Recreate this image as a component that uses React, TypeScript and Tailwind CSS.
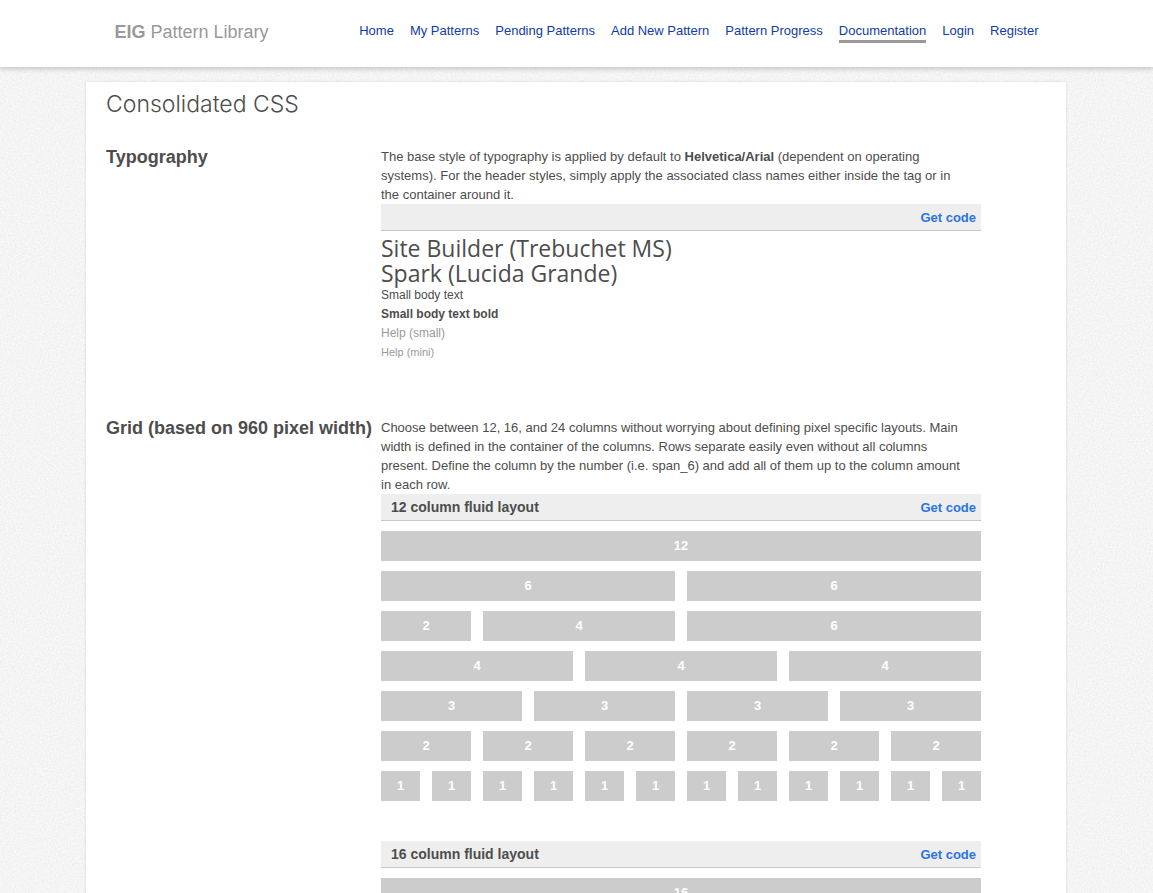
import type { ReactNode } from "react";

const navItems = [
  "Home",
  "My Patterns",
  "Pending Patterns",
  "Add New Pattern",
  "Pattern Progress",
  "Documentation",
  "Login",
  "Register",
];

const spanClass: Record<number, string> = {
  1: "col-span-1",
  2: "col-span-2",
  3: "col-span-3",
  4: "col-span-4",
  6: "col-span-6",
  12: "col-span-12",
};

const twelveColumnRows = [
  [12],
  [6, 6],
  [2, 4, 6],
  [4, 4, 4],
  [3, 3, 3, 3],
  [2, 2, 2, 2, 2, 2],
  [1, 1, 1, 1, 1, 1, 1, 1, 1, 1, 1, 1],
];

function PaperTexture() {
  return (
    <svg className="absolute inset-0 -z-10 h-full w-full" aria-hidden="true">
      <filter id="paper" x="0" y="0" width="100%" height="100%" colorInterpolationFilters="sRGB">
        <feTurbulence type="fractalNoise" baseFrequency="0.6" numOctaves="3" stitchTiles="stitch" />
        <feColorMatrix
          type="matrix"
          values="0.08 0 0 0 0.918  0.08 0 0 0 0.918  0.08 0 0 0 0.918  0 0 0 0 1"
        />
      </filter>
      <rect width="100%" height="100%" filter="url(#paper)" />
    </svg>
  );
}

function CodeBar({ title }: { title?: string }) {
  return (
    <div className="flex h-[27px] items-center justify-between border-b border-[#c8c8c8] bg-[#eeeeee] pr-[5px] pl-2.5 font-bold">
      <h3 className="text-sm">{title}</h3>
      <a href="#code" className="text-[13px] text-[#2a75e0]">
        Get code
      </a>
    </div>
  );
}

function Cell({ span, className }: { span: number; className: string }) {
  return (
    <div
      className={`${className} flex h-[30px] items-center justify-center bg-[#cccccc] pb-0.5 text-[13px] font-bold text-white`}
    >
      {span}
    </div>
  );
}

function Section({ title, children }: { title: string; children: ReactNode }) {
  return (
    <section className="flex flex-col md:flex-row">
      <h2 className="shrink-0 text-lg leading-[21px] font-bold md:w-[275px] md:whitespace-nowrap">
        {title}
      </h2>
      <div className="w-full max-w-[600px] min-w-0">{children}</div>
    </section>
  );
}

export default function App() {
  return (
    <div className="relative isolate min-h-screen overflow-hidden bg-[#f4f4f4] font-['Liberation_Sans',Arial,sans-serif] text-[13px] leading-[19px] text-[#4d4d4d]">
      <PaperTexture />
      <header className="bg-white shadow-[0_1px_5px_1px_rgba(0,0,0,0.2)]">
        <div className="mx-auto flex min-h-[67px] max-w-[980px] flex-wrap items-start justify-between gap-x-4 px-7 pt-[21px]">
          <a href="#home" className="text-lg leading-[22px] text-[#999999]">
            <strong>EIG</strong> Pattern Library
          </a>
          <nav className="flex flex-wrap gap-x-4">
            {navItems.map((item) => (
              <a
                key={item}
                href="#nav"
                className={
                  item === "Documentation"
                    ? "border-b-[3px] border-[#999999] text-[#0f3ca8]"
                    : "text-[#0f3ca8]"
                }
              >
                {item}
              </a>
            ))}
          </nav>
        </div>
      </header>

      <div className="flex justify-center pt-[15px] pr-px">
        <main className="w-full max-w-[980px] bg-white px-5 pt-2 shadow-[0_0_3px_rgba(0,0,0,0.12)]">
          <h1 className="mb-[29px] font-['Inter','Liberation_Sans',sans-serif] text-[23px] leading-7 font-light">
            Consolidated CSS
          </h1>

          <Section title="Typography">
            <p>
              The base style of typography is applied by default to <strong>Helvetica/Arial</strong>{" "}
              (dependent on operating <br className="hidden md:inline" />
              systems). For the header styles, simply apply the associated class names either inside
              the tag or in <br className="hidden md:inline" />
              the container around it.
            </p>
            <CodeBar />
            <div className="mt-[5px] mb-14">
              <p className="font-['Open_Sans','Noto_Sans',sans-serif] text-[23px] leading-[25px]">
                Site Builder (Trebuchet MS)
              </p>
              <p className="font-['Open_Sans','Noto_Sans',sans-serif] text-[23px] leading-[25px]">
                Spark (Lucida Grande)
              </p>
              <p className="text-xs leading-[19px]">Small body text</p>
              <p className="text-xs leading-[19px] font-bold">Small body text bold</p>
              <p className="text-xs leading-[19px] text-[#999999]">Help (small)</p>
              <p className="text-[11px] leading-[19px] text-[#999999]">Help (mini)</p>
            </div>
          </Section>

          <Section title="Grid (based on 960 pixel width)">
            <p>
              Choose between 12, 16, and 24 columns without worrying about defining pixel specific
              layouts. Main <br className="hidden md:inline" />
              width is defined in the container of the columns. Rows separate easily even without
              all columns <br className="hidden md:inline" />
              present. Define the column by the number (i.e. span_6) and add all of them up to the
              column amount <br className="hidden md:inline" />
              in each row.
            </p>
            <CodeBar title="12 column fluid layout" />
            <div className="mt-2.5 mb-10 grid grid-cols-12 gap-x-3 gap-y-2.5">
              {twelveColumnRows.flatMap((row, r) =>
                row.map((span, c) => (
                  <Cell key={`${r}-${c}`} span={span} className={spanClass[span]} />
                )),
              )}
            </div>
            <CodeBar title="16 column fluid layout" />
            <div className="mt-2.5 grid grid-cols-1">
              <Cell span={16} className="col-span-1" />
            </div>
          </Section>
        </main>
      </div>
    </div>
  );
}
